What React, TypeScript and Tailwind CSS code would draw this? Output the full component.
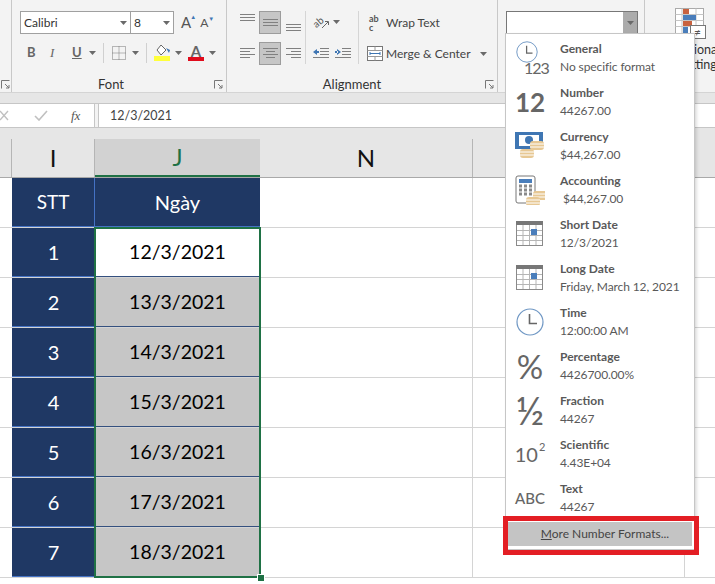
const font = { fontFamily: "Lato, 'Open Sans', sans-serif" };

const Caret = () => (
  <svg width="7" height="4" viewBox="0 0 7 4" className="shrink-0">
    <path d="M0 0h7L3.5 4z" fill="#6a6a6a" />
  </svg>
);

const Launcher = () => (
  <svg width="9" height="9" viewBox="0 0 9 9" className="shrink-0">
    <path d="M.5 8.5v-8h8M4 4l4 4M8 5v3H5" fill="none" stroke="#777" />
  </svg>
);

const Lines = ({ rows }: { rows: [number, number][] }) => (
  <svg width="15" height={rows.length * 3 + 1} viewBox={`0 0 15 ${rows.length * 3 + 1}`}>
    {rows.map(([a, b], i) => (
      <path key={i} d={`M${a} ${i * 3 + 1.5}H${b}`} stroke="#808080" />
    ))}
  </svg>
);

const AlignBtn = ({ on, rows, pos }: { on?: boolean; rows: [number, number][]; pos?: string }) => (
  <div
    className={`flex h-[23px] w-[22px] justify-center ${pos ?? "items-center"} ${
      on ? "border border-[#9c9c9c] bg-[#c6c6c6]" : ""
    }`}
  >
    <Lines rows={rows} />
  </div>
);

const Calendar = () => (
  <svg width="28" height="26" viewBox="0 0 28 26">
    <rect x="0.5" y="0.5" width="26" height="24" fill="#fff" stroke="#8a8a8a" />
    <rect x="0" y="0" width="27" height="4" fill="#777" />
    <path d="M7 4v20M13.5 4v20M20 4v20M1 9.5h25M1 14.5h25M1 19.5h25" stroke="#b5b5b5" />
    <rect x="15" y="8" width="6" height="6" fill="#4a7ebb" />
  </svg>
);

const Clock = ({ size = 28 }: { size?: number }) => (
  <svg width={size} height={size} viewBox="0 0 28 28">
    <circle cx="14" cy="14" r="13" fill="#fff" stroke="#6f97c4" strokeWidth="1.2" />
    <path d="M13.5 6v9.5H21" fill="none" stroke="#666" strokeWidth="1.6" />
  </svg>
);

const Coins = ({ x, y }: { x: number; y: number }) => (
  <g transform={`translate(${x} ${y})`}>
    <rect x="0" y="0" width="14" height="9" rx="3" fill="#e7c894" />
    <path d="M0 3h14M0 6h14" stroke="#fff" />
  </g>
);

const NumberFormatIcon = ({ name }: { name: string }) => {
  if (name === "General")
    return (
      <div className="relative h-[36px] w-[36px]">
        <div className="absolute left-[4px] top-[1px]">
          <Clock size={22} />
        </div>
        <div className="absolute bottom-[-2px] left-[12px] text-[16px] leading-[20px] tracking-[-1px] text-[#666]">
          123
        </div>
      </div>
    );
  if (name === "Number") return <div className="text-[26px] font-bold leading-none text-[#666]">12</div>;
  if (name === "Currency")
    return (
      <svg width="30" height="30" viewBox="0 0 30 30">
        <rect x="0" y="1" width="28" height="17" fill="#3f76b3" />
        <rect x="4" y="4" width="20" height="11" fill="#fff" />
        <circle cx="14" cy="9" r="4" fill="#3f76b3" />
        <Coins x={15} y={10} />
        <Coins x={5} y={18} />
      </svg>
    );
  if (name === "Accounting")
    return (
      <svg width="30" height="30" viewBox="0 0 30 30">
        <rect x="1" y="1" width="19" height="27" rx="2" fill="#fff" stroke="#777" />
        <rect x="4" y="4" width="13" height="4" fill="#4a7ebb" />
        <path d="M4 11h13M4 15h13M4 19h13" stroke="#8a8a8a" strokeWidth="3" strokeDasharray="3 2" />
        <Coins x={18} y={16} />
        <Coins x={11} y={22} />
      </svg>
    );
  if (name === "Short Date" || name === "Long Date") return <Calendar />;
  if (name === "Time") return <Clock />;
  if (name === "Percentage") return <div className="text-[33px] leading-none text-[#666]">%</div>;
  if (name === "Fraction") return <div className="text-[39px] leading-none text-[#666]">½</div>;
  if (name === "Scientific")
    return (
      <div className="flex items-start text-[20px] leading-none text-[#666]">
        10<span className="-mt-[3px] ml-[1px] text-[11px] leading-none">2</span>
      </div>
    );
  return <div className="text-[15px] font-medium leading-none text-[#666]">ABC</div>;
};

const formats = [
  ["General", "No specific format"],
  ["Number", "44267.00"],
  ["Currency", "$44,267.00"],
  ["Accounting", "\u00a0$44,267.00"],
  ["Short Date", "12/3/2021"],
  ["Long Date", "Friday, March 12, 2021"],
  ["Time", "12:00:00 AM"],
  ["Percentage", "4426700.00%"],
  ["Fraction", "44267"],
  ["Scientific", "4.43E+04"],
  ["Text", "44267"],
];

const NumberMenu = () => (
  <div className="absolute left-[506px] top-[34px] w-[188px] bg-white shadow-[0_0_0_1px_#c6c6c6,2px_2px_4px_rgba(0,0,0,0.2)]">
    <div className="pt-[2px]">
      {formats.map(([name, sample]) => (
        <div key={name} className="flex h-[44px] items-center">
          <div className="flex w-[54px] shrink-0 justify-center pr-[6px]">
            <NumberFormatIcon name={name} />
          </div>
          <div className="text-[12px] leading-[18px] text-[#595959]">
            <div className="font-bold">{name}</div>
            <div className="tracking-[-0.1px]">{sample}</div>
          </div>
        </div>
      ))}
    </div>
    <div className="px-[2px] pb-[3px] pt-[2px]">
      <div className="flex h-[24px] items-center justify-center bg-[#c4c4c4] pl-[10px] text-[12px] text-[#444]">
        <span>
          <u>M</u>ore Number Formats...
        </span>
      </div>
    </div>
    <div className="absolute left-[-3px] top-[482px] h-[39px] w-[196px] border-[5px] border-[#e31e24]" />
  </div>
);

const Ribbon = () => (
  <div className="flex h-[92px] bg-[#f3f3f3] text-[12px] text-[#333]">
    <div className="w-[12px] border-r border-[#c8c8c8] pl-[1px] pt-[80px]">
      <Launcher />
    </div>

    {/* Font */}
    <div className="flex w-[215px] flex-col border-r border-[#c8c8c8]">
      <div className="flex pl-[8px] pt-[11px]">
        <div className="flex h-[23px] w-[111px] items-center justify-between border border-[#a0a0a0] bg-white pl-[3px] pr-[3px]">
          Calibri
          <Caret />
        </div>
        <div className="flex h-[23px] w-[43px] items-center justify-between border border-l-0 border-[#a0a0a0] bg-white pl-[3px] pr-[3px]">
          8
          <Caret />
        </div>
        <div className="ml-[7px] flex items-center gap-[9px] text-[#555]">
          <span className="relative text-[15px]">
            A<span className="absolute right-[-5px] top-[1px] text-[6px] text-[#3f76b3]">▲</span>
          </span>
          <span className="relative text-[12px]">
            A<span className="absolute right-[-6px] top-[0px] text-[6px] text-[#3f76b3]">▼</span>
          </span>
        </div>
      </div>
      <div className="mt-[7px] flex h-[23px] items-center pl-[15px] text-[#666]">
        <span className="w-[23px] text-[13px] font-bold">B</span>
        <span className="w-[22px] text-[13px] italic" style={{ fontFamily: "'Liberation Serif', serif" }}>
          I
        </span>
        <span className="w-[17px] text-[13px] font-bold underline">U</span>
        <Caret />
        <div className="ml-[7px] h-[20px] w-px bg-[#d0d0d0]" />
        <svg width="14" height="14" viewBox="0 0 14 14" className="ml-[8px]">
          <path d="M.5.5h13v13H.5zM7 .5v13M.5 7h13" fill="none" stroke="#777" strokeDasharray="1 1" />
        </svg>
        <div className="ml-[6px]">
          <Caret />
        </div>
        <div className="ml-[7px] h-[20px] w-px bg-[#d0d0d0]" />
        <svg width="17" height="17" viewBox="0 0 17 17" className="ml-[7px]">
          <path d="M7 1l5 5-5 5-4-5z" fill="#fff" stroke="#666" />
          <path d="M12 4l4 2-1 3z" fill="#3f76b3" />
          <rect x="0" y="12" width="16" height="5" fill="#ffff3b" />
        </svg>
        <div className="ml-[4px]">
          <Caret />
        </div>
        <div className="relative ml-[6px] h-[17px] w-[16px] text-center text-[15px] font-bold leading-[14px]">
          A<div className="absolute bottom-0 left-0 h-[4px] w-[16px] bg-[#e00b1c]" />
        </div>
        <div className="ml-[5px]">
          <Caret />
        </div>
      </div>
      <div className="relative mt-auto flex h-[17px] items-start justify-center pr-[16px] text-[13px]">
        Font
        <div className="absolute right-[3px] top-[5px]">
          <Launcher />
        </div>
      </div>
    </div>

    {/* Alignment */}
    <div className="flex w-[271px] flex-col border-r border-[#c8c8c8]">
      <div className="flex pt-[11px]">
        <div className="grid w-[78px] grid-cols-3 gap-y-[8px] pl-[9px]">
          <AlignBtn rows={[[0, 15], [0, 15], [0, 15]]} pos="items-start pt-[2px]" />
          <AlignBtn on rows={[[0, 15], [0, 15], [0, 15]]} />
          <AlignBtn rows={[[0, 15], [0, 15], [0, 15]]} pos="items-end pb-[1px]" />
          <AlignBtn rows={[[0, 15], [0, 10], [0, 15], [0, 10]]} />
          <AlignBtn on rows={[[0, 15], [3, 12], [0, 15], [3, 12]]} />
          <AlignBtn rows={[[0, 15], [5, 15], [0, 15], [5, 15]]} />
        </div>
        <div className="flex h-[53px] flex-col gap-[8px] border-x border-[#d5d5d5] px-[7px]">
          <div className="flex h-[23px] items-center gap-[4px]">
            <svg width="16" height="16" viewBox="0 0 16 16" className="overflow-visible">
              <text x="0" y="11" fontSize="10" fill="#555" transform="rotate(-40 6 8)">ab</text>
              <path d="M9 14l6-6M12 7.5h3.5V11" fill="none" stroke="#666" />
            </svg>
            <Caret />
          </div>
          <div className="flex h-[23px] items-center gap-[6px]">
            <svg width="16" height="12" viewBox="0 0 16 12">
              <path d="M7 1.5h9M7 4.5h9M7 7.5h9M0 10.5h16" stroke="#808080" />
              <path d="M0 5l4-3v6z M3 4h3v2H3z" fill="#3f76b3" />
            </svg>
            <svg width="16" height="12" viewBox="0 0 16 12">
              <path d="M7 1.5h9M7 4.5h9M7 7.5h9M0 10.5h16" stroke="#808080" />
              <path d="M6 5L2 2v6z M0 4h3v2H0z" fill="#3f76b3" />
            </svg>
          </div>
        </div>
        <div className="flex flex-col gap-[8px] pl-[8px] text-[12px] text-[#444]">
          <div className="flex h-[23px] items-center">
            <div className="flex w-[18px] flex-col pl-[2px] text-[9px] font-bold leading-[9px] text-[#555]">
              <span>ab</span>
              <span>c</span>
            </div>
            <span className="ml-[1px]">Wrap Text</span>
          </div>
          <div className="flex h-[23px] items-center">
            <svg width="16" height="15" viewBox="0 0 16 15">
              <rect x=".5" y=".5" width="15" height="14" fill="#fff" stroke="#777" />
              <path d="M.5 4.5h15M.5 10.5h15M8 .5v4M8 10.5v4" stroke="#999" />
              <path d="M3 7.5h10M3 6v3M13 6v3" stroke="#3f76b3" />
            </svg>
            <span className="ml-[3px]">Merge &amp; Center</span>
            <div className="ml-[9px]">
              <Caret />
            </div>
          </div>
        </div>
      </div>
      <div className="relative mt-auto flex h-[17px] items-start justify-center pr-[20px] text-[13px]">
        Alignment
        <div className="absolute right-[3px] top-[5px]">
          <Launcher />
        </div>
      </div>
    </div>

    {/* Number */}
    <div className="w-[147px] border-r border-[#c8c8c8] pl-[8px] pt-[11px]">
      <div className="flex h-[23px] w-[132px] justify-end border border-[#777] bg-white">
        <div className="flex w-[14px] items-center justify-center bg-[#ababab]">
          <Caret />
        </div>
      </div>
    </div>

    {/* Conditional formatting, mostly behind the menu */}
    <div className="relative flex-1">
      <svg width="32" height="32" viewBox="0 0 32 32" className="absolute left-[30px] top-[8px]">
        <rect x=".5" y=".5" width="28" height="25" fill="#fff" stroke="#aaa" />
        <path d="M7 .5v25M21 .5v25M.5 6.5h28M.5 12.5h28M.5 18.5h28" stroke="#c5c5c5" />
        <rect x="8" y="1" width="6" height="5" fill="#c8623f" />
        <rect x="8" y="7" width="13" height="5" fill="#4a7ebb" />
        <rect x="8" y="13" width="9" height="5" fill="#c8623f" />
        <rect x="8" y="19" width="5" height="6" fill="#4a7ebb" />
        <rect x="15.5" y="17.5" width="15" height="13" fill="#fff" stroke="#777" />
        <text x="19" y="28" fontSize="12" fill="#555">≠</text>
      </svg>
      <div className="absolute left-[12px] top-[42px] w-[60px] whitespace-nowrap text-center text-[12.5px] leading-[15px]">
        Conditional
        <br />
        Formatting
      </div>
    </div>
  </div>
);

const FormulaBar = () => (
  <div className="flex h-[36px] flex-col bg-[#e6e6e6]">
    <div className="h-[11px] border-t border-[#d4d4d4]" />
    <div className="flex h-[25px] border-y border-[#c6c6c6] bg-[#f3f3f3]">
      <div className="flex w-[95px] items-center border-r border-[#c6c6c6] bg-white text-[#c0c0c0]">
        <svg width="9" height="11" viewBox="0 0 9 11">
          <path d="M0 1l8 9M8 1l-8 9" stroke="#c0c0c0" strokeWidth="1.4" />
        </svg>
        <svg width="14" height="11" viewBox="0 0 14 11" className="ml-[25px]">
          <path d="M1 6l4 4 8-9" fill="none" stroke="#c0c0c0" strokeWidth="1.6" />
        </svg>
        <span className="ml-[23px] text-[13px] italic text-[#555]" style={{ fontFamily: "'Liberation Serif', serif" }}>
          fx
        </span>
      </div>
      <div className="ml-[3px] flex flex-1 items-center border-l border-[#c6c6c6] bg-white pl-[11px] pt-[1px] text-[12.5px] text-[#444]">
        12/3/2021
      </div>
    </div>
  </div>
);

const columns = [
  { label: "N", w: "w-[213px]" },
  { label: "", w: "w-[212px]" },
];

const rows = [
  ["1", "12/3/2021"],
  ["2", "13/3/2021"],
  ["3", "14/3/2021"],
  ["4", "15/3/2021"],
  ["5", "16/3/2021"],
  ["6", "17/3/2021"],
  ["7", "18/3/2021"],
];

const EmptyCells = () => (
  <>
    {columns.map((c) => (
      <div key={c.w} className={`${c.w} border-r border-[#d4d4d4]`} />
    ))}
  </>
);

const Sheet = () => (
  <div className="bg-white">
    <div className="h-[11px] bg-[#e6e6e6]" />
    <div className="flex h-[39px] border-b border-[#a9a9a9] bg-[#e6e6e6] text-[24px] text-[#111]">
      <div className="w-[12px] border-r border-[#b5b5b5]" />
      <div className="flex w-[83px] items-center justify-center border-r border-[#b5b5b5]">I</div>
      <div className="flex w-[165px] items-center justify-center border-b-2 border-[#1f7145] bg-[#d2d2d2] text-[#1f7145]">
        J
      </div>
      {columns.map((c) => (
        <div key={c.w} className={`flex ${c.w} items-center justify-center border-r border-[#b5b5b5]`}>
          {c.label}
        </div>
      ))}
    </div>
    <div className="relative">
      <div className="flex h-[50px] border-b border-[#d4d4d4]">
        <div className="w-[12px]" />
        <div className="flex w-[83px] items-center justify-center border-b border-r border-[#4472c4] bg-[#1f3864] text-[19px] text-white">
          STT
        </div>
        <div className="flex w-[165px] items-center justify-center border-b border-[#4472c4] bg-[#1f3864] text-[20px] text-white">
          Ngày
        </div>
        <EmptyCells />
      </div>
      {rows.map(([n, d], i) => (
        <div key={n} className="flex h-[50px] border-b border-[#d4d4d4]">
          <div className="w-[12px]" />
          <div className="flex w-[83px] items-center justify-center border-b border-[#4472c4] bg-[#1f3864] text-[20px] text-white">
            {n}
          </div>
          <div
            className={`flex w-[165px] items-center justify-center border-b border-[#34507f] text-[19.5px] text-black ${
              i === 0 ? "bg-white" : "bg-[#c6c6c6]"
            }`}
          >
            {d}
          </div>
          <EmptyCells />
        </div>
      ))}
      {/* selection outline */}
      <div className="absolute left-[94px] top-[49px] h-[351px] w-[167px] border-2 border-[#1f7145]">
        <div className="absolute bottom-[-5px] right-[-5px] h-[6px] w-[6px] bg-[#1f7145] outline outline-1 outline-white" />
      </div>
    </div>
  </div>
);

export default function App() {
  return (
    <div className="relative h-[584px] w-[715px] overflow-hidden bg-white" style={font}>
      <Ribbon />
      <FormulaBar />
      <Sheet />
      <NumberMenu />
    </div>
  );
}
